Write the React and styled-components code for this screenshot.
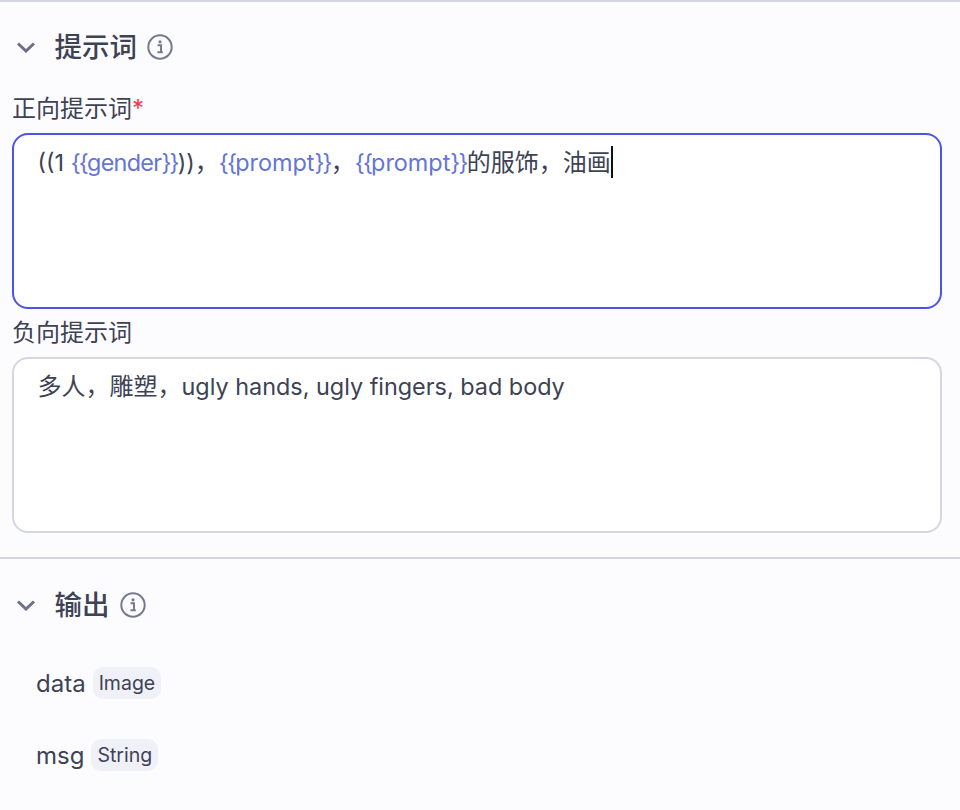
import React from 'react'
import styled, { createGlobalStyle } from 'styled-components'

const Global = createGlobalStyle`
  html, body {
    margin: 0;
    padding: 0;
    background: #fcfcff;
  }
  * {
    box-sizing: border-box;
  }
`

const Page = styled.div`
  width: 960px;
  height: 810px;
  overflow: hidden;
  background: #fcfcff;
  color: #3d4254;
  font-family: Inter, "Noto Sans CJK SC", sans-serif;
`

const Section = styled.section`
  padding: ${(p) => p.$top} 0 24px;
  border-top: 2px solid #d4d6e4;
`

const Header = styled.div`
  display: flex;
  align-items: center;
  height: 28px;
  padding-left: 16px;
`

const Chevron = styled.svg`
  width: 20px;
  height: 12px;
  margin-right: 18.5px;
`

const Title = styled.h2`
  margin: 0 10px 0 0;
  font-size: 27.5px;
  line-height: 28px;
  font-weight: 500;
  color: #3d4254;
`

const Info = styled.svg`
  width: 26px;
  height: 26px;
`

const Fields = styled.div`
  display: flex;
  flex-direction: column;
  gap: 8px;
  margin: 32px 0 0 12px;
`

const Label = styled.div`
  font-size: 24px;
  line-height: 32px;
  color: #3d4254;
`

const Star = styled.span`
  color: #f0384e;
`

const Box = styled.div`
  width: 930px;
  height: 176px;
  padding: 11px 23.5px;
  border-radius: 16px;
  border: 2px solid ${(p) => (p.$focused ? '#4d53e8' : '#d4d6e4')};
  background: #fff;
  font-size: 24px;
  line-height: 34px;
  color: #3d4254;
  white-space: pre;
`

const Latin = styled.span`
  font-size: 23.4px;
`

const VarText = styled(Latin)`
  color: #6474d8;
  letter-spacing: ${(p) => p.$spacing || 'normal'};
`

const Brace = styled.span`
  letter-spacing: -1.8px;
`

const Caret = styled.span`
  display: inline-block;
  width: 2px;
  height: 32px;
  background: #111;
  vertical-align: top;
`

const Outputs = styled.div`
  display: flex;
  flex-direction: column;
  gap: 40px;
  margin: 48px 0 0 36px;
`

const OutputRow = styled.div`
  display: flex;
  align-items: center;
  gap: 7px;
  height: 32px;
  font-size: 24px;
  color: #3d4254;
`

const Tag = styled.span`
  display: inline-flex;
  align-items: center;
  height: 32px;
  padding: 0 6px;
  border-radius: 10px;
  background: #f0f1f8;
  font-size: 19.5px;
`

const ChevronIcon = () => (
  <Chevron viewBox="0 0 20 12" fill="none">
    <path d="M2 2.5l8 7.5 8-7.5" stroke="#6b7088" strokeWidth="3" />
  </Chevron>
)

const InfoIcon = () => (
  <Info viewBox="0 0 26 26" fill="none">
    <circle cx="13" cy="13" r="11.7" stroke="#747a92" strokeWidth="2" />
    <circle cx="13" cy="7.8" r="1.6" fill="#747a92" />
    <path d="M10.5 11.3H14v7h1.8M10.4 18.3H14" stroke="#747a92" strokeWidth="2" />
  </Info>
)

const Var = ({ name, spacing }) => (
  <VarText $spacing={spacing}>
    <Brace>{'{{'}</Brace>
    {name}
    <Brace>{'}}'}</Brace>
  </VarText>
)

export default function App() {
  return (
    <Page>
      <Global />
      <Section $top="31px">
        <Header>
          <ChevronIcon />
          <Title>提示词</Title>
          <InfoIcon />
        </Header>
        <Fields>
          <Label>
            正向提示词<Star>*</Star>
          </Label>
          <Box $focused>
            <Latin>((1 </Latin>
            <Var name="gender" spacing="-0.7px" />
            <Latin>))</Latin>，<Var name="prompt" />，<Var name="prompt" />的服饰，油画<Caret />
          </Box>
          <Label>负向提示词</Label>
          <Box>
            多人，雕塑，<Latin>ugly hands, ugly fingers, bad body</Latin>
          </Box>
        </Fields>
      </Section>
      <Section $top="32px">
        <Header>
          <ChevronIcon />
          <Title>输出</Title>
          <InfoIcon />
        </Header>
        <Outputs>
          <OutputRow>
            data <Tag>Image</Tag>
          </OutputRow>
          <OutputRow>
            msg <Tag>String</Tag>
          </OutputRow>
        </Outputs>
      </Section>
    </Page>
  )
}
